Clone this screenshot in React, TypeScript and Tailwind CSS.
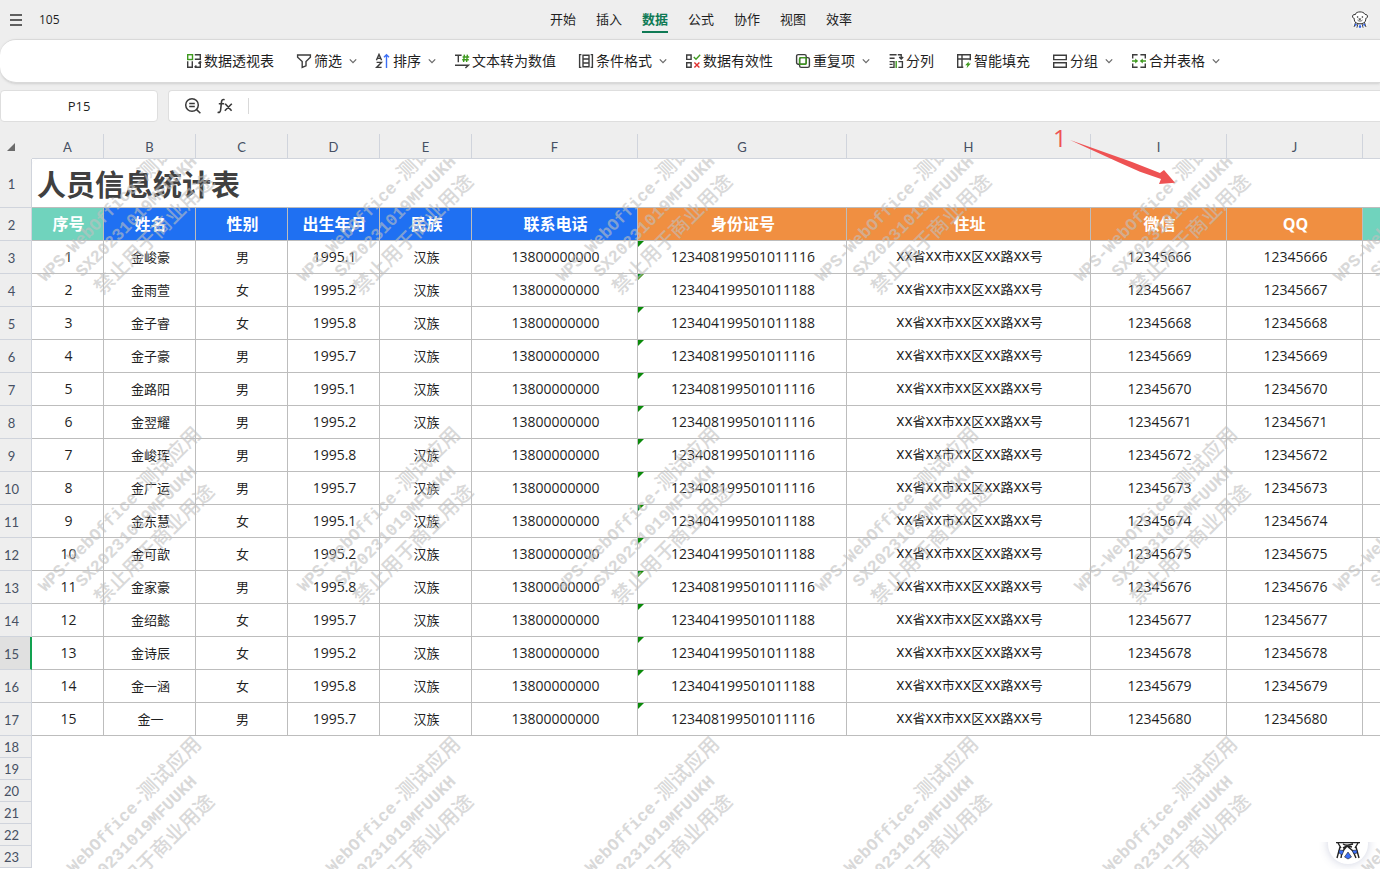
import { useState } from 'react';
import type { ReactNode } from 'react';

const tabs = ['开始', '插入', '数据', '公式', '协作', '视图', '效率'];

const DARK = '#3d3d3d';
const GREEN = '#3f9a1f';

const icons: Record<string, ReactNode> = {
  pivot: (
    <>
      <rect x="1.7" y="1.7" width="4.8" height="4.8" stroke={GREEN} />
      <path d="M8.8 1.7h5.5v4.6H8.8M1.7 8.3v6h4.6v-6M8.6 14.3h5.7V8.8M12.4 10.6l1.9-2 .9 1M10.4 12.6l-1.8 1.7" stroke={DARK} />
    </>
  ),
  filter: <path d="M1.6 2h12.8v2.2L10 8.6v4.2l-3.8 1.7V8.6L1.6 4.2z" stroke={DARK} />,
  sort: (
    <>
      <path d="M1.4 7.2 4 1.4l2.6 5.8M2.3 5.4h3.4M1.6 9.4h4.8l-4.8 5h5" stroke={DARK} />
      <path d="M11.5 15V1.8M9 4.2l2.5-2.5L14 4.2" stroke="#3b6ef5" />
    </>
  ),
  toNumber: (
    <>
      <path d="M1 2.2h6.6M4.3 2.2v7M1 12.2h13.4l-3 2.8" stroke={DARK} />
      <path d="M10.4 1.6 9.6 9M13.4 1.6 12.6 9M8.6 4h6.6M8.2 6.8h6.6" stroke={GREEN} />
    </>
  ),
  condition: (
    <path d="M3.4 1.6H1.6v12.8h1.8M12.6 1.6h1.8v12.8h-1.8M5 2.2h6v11.6H5zM5 6h6M5 10h6" stroke={DARK} />
  ),
  validity: (
    <>
      <path d="M1.7 2h4.4v4.4H1.7zM1.7 9.8h4.4v4.4H1.7z" stroke={DARK} />
      <path d="m8.8 4 2.2 2.2 4.2-4.4" stroke={GREEN} />
      <path d="m9.4 9.6 5 5M14.4 9.6l-5 5" stroke="#e0312f" />
    </>
  ),
  duplicate: (
    <>
      <rect x="1.6" y="1.6" width="9.6" height="9.6" rx="1.6" stroke={DARK} />
      <rect x="4.6" y="4.6" width="9.8" height="9.8" rx="1.6" stroke={DARK} />
      <rect x="4.6" y="4.6" width="6.6" height="6.6" rx="1" stroke={GREEN} />
    </>
  ),
  split: (
    <>
      <path d="M1.6 1.8h7M1.6 5.2h5M9.800 1.800h3.400v4M11.2 4l2 2 2-2M6 8.6H1.6M6 14.4H1.6M6 7.900v7.200M1.6 11.4h3M10.400 8.600h4v5.800h-4" stroke={DARK} />
      <path d="M8.2 8v7" stroke={GREEN} />
    </>
  ),
  fill: (
    <>
      <path d="M14.3 7.2V1.8H1.7v12.500h5.600M1.700 6h12.600M6 1.800v12.500" stroke={DARK} />
      <path d="M12.8 8.4 9.2 12.200h2.200l-.8 3 4.2-4.600h-2.200z" fill={GREEN} stroke="none" />
    </>
  ),
  group: <path d="M1.7 2.2h12.6v4.4H1.7zM1.7 9.8h12.6v4.4H1.7z" stroke={DARK} />,
  merge: (
    <>
      <path d="M6.6 1.8H1.7v3.600M9.4 1.8h4.9v3.600M6.6 14.2H1.7v-3.600M9.4 14.2h4.9v-3.600" stroke={DARK} />
      <path d="M1 8h4.4M15 8h-4.4" stroke={GREEN} />
      <path d="M4.2 5.6 7.2 8l-3 2.4zM11.8 5.6 8.8 8l3 2.4z" fill={GREEN} stroke="none" />
    </>
  ),
};

const tools = [
  { icon: 'pivot', label: '数据透视表', menu: false },
  { icon: 'filter', label: '筛选', menu: true },
  { icon: 'sort', label: '排序', menu: true },
  { icon: 'toNumber', label: '文本转为数值', menu: false },
  { icon: 'condition', label: '条件格式', menu: true },
  { icon: 'validity', label: '数据有效性', menu: false },
  { icon: 'duplicate', label: '重复项', menu: true },
  { icon: 'split', label: '分列', menu: false },
  { icon: 'fill', label: '智能填充', menu: false },
  { icon: 'group', label: '分组', menu: true },
  { icon: 'merge', label: '合并表格', menu: true },
];

const columns = [
  { letter: 'A', title: '序号', width: 'w-[72px]', bg: 'bg-[#70d3bd]' },
  { letter: 'B', title: '姓名', width: 'w-[92px]', bg: 'bg-[#1f70f2]' },
  { letter: 'C', title: '性别', width: 'w-[92px]', bg: 'bg-[#1f70f2]' },
  { letter: 'D', title: '出生年月', width: 'w-[92px]', bg: 'bg-[#1f70f2]' },
  { letter: 'E', title: '民族', width: 'w-[92px]', bg: 'bg-[#1f70f2]' },
  { letter: 'F', title: '联系电话', width: 'w-[166px]', bg: 'bg-[#1f70f2]' },
  { letter: 'G', title: '身份证号', width: 'w-[209px]', bg: 'bg-[#f08f41]' },
  { letter: 'H', title: '住址', width: 'w-[244px]', bg: 'bg-[#f08f41]' },
  { letter: 'I', title: '微信', width: 'w-[136px]', bg: 'bg-[#f08f41]' },
  { letter: 'J', title: 'QQ', width: 'w-[136px]', bg: 'bg-[#f08f41]' },
];

const people = [
  { name: '金峻豪', sex: '男', birth: '1995.1', id: '123408199501011116' },
  { name: '金雨萱', sex: '女', birth: '1995.2', id: '123404199501011188' },
  { name: '金子睿', sex: '女', birth: '1995.8', id: '123404199501011188' },
  { name: '金子豪', sex: '男', birth: '1995.7', id: '123408199501011116' },
  { name: '金路阳', sex: '男', birth: '1995.1', id: '123408199501011116' },
  { name: '金翌耀', sex: '男', birth: '1995.2', id: '123408199501011116' },
  { name: '金峻珲', sex: '男', birth: '1995.8', id: '123408199501011116' },
  { name: '金广运', sex: '男', birth: '1995.7', id: '123408199501011116' },
  { name: '金东慧', sex: '女', birth: '1995.1', id: '123404199501011188' },
  { name: '金可歆', sex: '女', birth: '1995.2', id: '123404199501011188' },
  { name: '金家豪', sex: '男', birth: '1995.8', id: '123408199501011116' },
  { name: '金绍懿', sex: '女', birth: '1995.7', id: '123404199501011188' },
  { name: '金诗辰', sex: '女', birth: '1995.2', id: '123404199501011188' },
  { name: '金一涵', sex: '女', birth: '1995.8', id: '123404199501011188' },
  { name: '金一', sex: '男', birth: '1995.7', id: '123408199501011116' },
];

const emptyRows = [18, 19, 20, 21, 22, 23];
const SELECTED_ROW = 15;

const cell = 'border-r border-b border-[#bdbdbd] p-0 pl-0.5 text-center';
const cjk = "font-['Noto_Sans_CJK_SC',sans-serif] text-[13px]";
const num = "font-['Open_Sans','Noto_Sans_CJK_SC',sans-serif] text-sm";

function ToolIcon({ name }: { name: string }) {
  return (
    <svg viewBox="0 0 16 16" className="h-4 w-4 shrink-0" fill="none" strokeWidth="1.4" aria-hidden="true">
      {icons[name]}
    </svg>
  );
}

function RowHead({ n }: { n: number }) {
  const selected = n === SELECTED_ROW;
  return (
    <th
      scope="row"
      className={`border-b border-b-[#d0d4dc] p-0 text-center font-['Lato',sans-serif] text-[13px] leading-4 font-normal text-[#465063] ${
        n < 18 ? 'pt-0.5' : ''
      } ${selected ? 'border-r-2 border-r-[#12a150] bg-[#e0e0e0] pr-[7px]' : 'border-r border-r-[#d0d4dc] bg-[#eeeeee] pr-2'}`}
    >
      {n}
    </th>
  );
}

function Watermarks() {
  return (
    <div className="pointer-events-none absolute inset-x-0 top-[25px] bottom-0 ml-8 overflow-hidden" aria-hidden="true">
      <div className="-mt-[99px] -ml-[26px]">
        {[0, 1, 2].map((r) => (
          <div key={r} className="flex">
            {[0, 1, 2, 3, 4, 5].map((c) => (
              <div key={c} className="flex h-[310px] w-[259px] shrink-0 items-center justify-center">
                <div className="-rotate-45 text-center font-['Noto_Sans_CJK_SC',sans-serif] text-xl leading-[23px] font-medium whitespace-nowrap text-[#c0c0c0] opacity-60">
                  <p>
                    <span className="font-['Liberation_Mono',monospace] text-[17px] font-bold">WPS-WebOffice-</span>测试应用
                  </p>
                  <p className="font-['Liberation_Mono',monospace] text-[17px] leading-[23px] font-bold">SX20231019MFUUKH</p>
                  <p>禁止用于商业用途</p>
                </div>
              </div>
            ))}
          </div>
        ))}
      </div>
    </div>
  );
}

function Avatar() {
  return (
    <svg viewBox="0 0 18 18" className="h-[18px] w-[18px]" fill="none" strokeLinecap="round" aria-hidden="true">
      <circle cx="9" cy="9" r="8.8" fill="#fafafa" />
      <path
        d="M4 3.4C5 1.4 7 .9 9 .9s4 .5 5 2.5c1.6-.3 2.8 1 2.4 2.6-.3 1-1 1.4-1.6 1.3.2 2.4-.8 4.1-2.6 4.9-2 .8-4.4.8-6.4 0C4 11.4 3 9.7 3.2 7.3c-.6.1-1.3-.3-1.6-1.3C1.2 4.4 2.4 3.1 4 3.4z"
        fill="#fff"
        stroke="#333"
        strokeWidth="1"
      />
      <circle cx="6.6" cy="6" r=".8" fill="#222" />
      <circle cx="11.4" cy="6" r=".8" fill="#222" />
      <path d="M8.2 7.8h1.6L9 8.7zM6.8 9.4c.8 1 3.6 1 4.4 0" stroke="#333" strokeWidth=".8" />
      <path d="M4.6 11.4 3.2 15.6M13.4 11.4l1.4 4.2M7 12.6l-1 3.8M11 12.6l1 3.8" stroke="#333" strokeWidth=".9" />
      <path d="m3.6 12.6 2.6.8-1.6 2zM14.4 12.6l-2.6.8 1.6 2zM9 13l-1.4 3L9 17.2l1.4-1.2z" fill="#2f62e8" />
    </svg>
  );
}

export default function App() {
  const [tab, setTab] = useState('数据');
  const [formula, setFormula] = useState('');
  const [cellRef, setCellRef] = useState('P15');

  return (
    <div className="flex h-screen flex-col overflow-hidden bg-[#eeeeee] font-['Open_Sans','Noto_Sans_CJK_SC',sans-serif] text-[#1f1f1f]">
      <header className="grid h-[39px] shrink-0 grid-cols-[1fr_auto_1fr] items-center">
        <div className="flex items-center gap-4 pl-[9px]">
          <button aria-label="菜单">
            <svg viewBox="0 0 14 14" className="h-3.5 w-3.5" stroke="#5f5f5f" strokeWidth="2" aria-hidden="true">
              <path d="M1 2h12M1 7h12M1 12h12" />
            </svg>
          </button>
          <span className="text-xs">105</span>
        </div>
        <nav className="-mt-px flex gap-5 pl-[22px]">
          {tabs.map((t) => (
            <button
              key={t}
              onClick={() => setTab(t)}
              className={`border-y-2 border-t-transparent py-0.5 text-[13px] leading-5 ${
                tab === t ? 'border-b-[#0f7a55] font-bold text-[#0f7a55]' : 'border-b-transparent'
              }`}
            >
              {t}
            </button>
          ))}
        </nav>
        <button className="mr-[11px] justify-self-end" aria-label="用户">
          <Avatar />
        </button>
      </header>

      {/* Ribbon */}
      <div className="flex h-11 shrink-0 items-center justify-center gap-[22px] rounded-l-2xl border-y border-[#d9d9d9] bg-white pl-[22px] shadow-sm">
        {tools.map((t) => (
          <button key={t.label} className="flex shrink-0 items-center text-sm whitespace-nowrap">
            <ToolIcon name={t.icon} />
            <span className="ml-0.5">{t.label}</span>
            {t.menu && (
              <svg viewBox="0 0 8 8" className="-mr-1 ml-[7px] h-2 w-2" fill="none" stroke="#6b6b6b" strokeWidth="1.3" aria-hidden="true">
                <path d="m.8 2.4 3.2 3.2 3.2-3.2" />
              </svg>
            )}
          </button>
        ))}
      </div>

      {/* Name box and formula bar */}
      <div className="mt-[7px] flex h-8 shrink-0 gap-2.5">
        <input
          aria-label="名称框"
          value={cellRef}
          onChange={(e) => setCellRef(e.target.value)}
          className="w-[158px] rounded border border-[#dedede] bg-white pt-0.5 text-center text-[13px]"
        />
        <div className="flex flex-1 items-center rounded-l border border-r-0 border-[#dedede] bg-white pl-[15px]">
          <button aria-label="查找">
            <svg viewBox="0 0 18 18" className="h-[18px] w-[18px]" fill="none" stroke="#3a3a3a" strokeWidth="1.5" aria-hidden="true">
              <circle cx="8" cy="8" r="6.3" />
              <path d="m12.6 12.6 3.8 3.6M5.2 6.6h5.6M5.2 9.4h5.6" />
            </svg>
          </button>
          <button className="ml-[15px]" aria-label="插入函数">
            <svg viewBox="0 0 16 16" className="h-4 w-4" fill="none" stroke="#3a3a3a" strokeWidth="1.6" aria-hidden="true">
              <path d="M7.6 1.8C5.6 1 4.7 2 4.5 3.8L3.6 12c-.2 1.9-1.2 2.8-3 2.2M1.8 5.8h5.4M8.2 5.8l6.4 7M14.8 5.8l-7 7" />
            </svg>
          </button>
          <label className="ml-[15px] flex h-4 flex-1 items-center border-l border-[#d9d9d9] pl-2">
            <input aria-label="编辑栏" value={formula} onChange={(e) => setFormula(e.target.value)} className="w-full text-[13px] outline-none" />
          </label>
        </div>
      </div>

      {/* Sheet */}
      <main className="relative mt-3 flex-1 bg-white">
        <table className="w-full min-w-[1380px] table-fixed border-separate border-spacing-0">
          <colgroup>
            <col className="w-8" />
            {columns.map((c) => (
              <col key={c.letter} className={c.width} />
            ))}
            <col />
          </colgroup>
          <thead>
            <tr className="h-[25px] bg-[#eeeeee]">
              <th className="p-0" aria-label="全选">
                <svg viewBox="0 0 8 8" className="ml-[7px] h-2 w-2" fill="#6b6b6b" aria-hidden="true">
                  <path d="M8 0v8H0z" />
                </svg>
              </th>
              {columns.map((c) => (
                <th
                  key={c.letter}
                  scope="col"
                  className="border-r border-b border-[#d0d4dc] p-0 pt-0.5 font-['Lato',sans-serif] text-[13px] leading-4 font-normal text-[#465063]"
                >
                  {c.letter}
                </th>
              ))}
              <th className="border-b border-[#d0d4dc] p-0" />
            </tr>
          </thead>
          <tbody>
            <tr className="h-[49px] bg-[#eeeeee]">
              <RowHead n={1} />
              <td
                colSpan={11}
                className="rounded-tl-md border-b border-[#bdbdbd] bg-white p-0 pl-[5px] font-['Noto_Sans_CJK_SC',sans-serif] text-[29px] leading-10 font-bold text-[#404040]"
              >
                人员信息统计表
              </td>
            </tr>
            <tr className="h-[33px]">
              <RowHead n={2} />
              {columns.map((c) => (
                <td key={c.letter} className={`${cell} ${c.bg} text-base font-bold text-white`}>
                  {c.title}
                </td>
              ))}
              <td className="border-b border-[#bdbdbd] bg-[#70d3bd] p-0" />
            </tr>
            {people.map((p, i) => (
              <tr key={p.name} className="h-[33px]">
                <RowHead n={i + 3} />
                <td className={`${cell} ${num}`}>{i + 1}</td>
                <td className={`${cell} ${cjk}`}>{p.name}</td>
                <td className={`${cell} ${cjk}`}>{p.sex}</td>
                <td className={`${cell} ${num}`}>{p.birth}</td>
                <td className={`${cell} ${cjk}`}>汉族</td>
                <td className={`${cell} ${num}`}>13800000000</td>
                <td className={`${cell} ${num} relative`}>
                  <span className="absolute top-0 left-0 border-t-[6px] border-r-[6px] border-t-[#0a8a0a] border-r-transparent" />
                  {p.id}
                </td>
                <td className={`${cell} font-['Roboto','Noto_Sans_CJK_SC',sans-serif] text-[13px]`}>XX省XX市XX区XX路XX号</td>
                <td className={`${cell} ${num}`}>{12345666 + i}</td>
                <td className={`${cell} ${num}`}>{12345666 + i}</td>
                <td className="border-b border-[#bdbdbd] p-0" />
              </tr>
            ))}
            {emptyRows.map((n) => (
              <tr key={n} className="h-[22px]">
                <RowHead n={n} />
                <td colSpan={11} className="p-0" />
              </tr>
            ))}
          </tbody>
        </table>

        <Watermarks />

        {/* Step marker pointing at the sheet */}
        <div className="pointer-events-none absolute -top-3 left-[1053px] flex items-start text-[#ee5253]">
          <span className="text-2xl">1</span>
          <svg viewBox="0 0 110 50" className="mt-4 h-[50px] w-[110px]" fill="currentColor" aria-hidden="true">
            <path d="M3 2 65 24l28 11 4-3 11 12.7L92 46l2-5-21-7.3L51 24z" />
          </svg>
        </div>

        {/* Assistant bubble, its upper half stays tucked away */}
        <div className="absolute right-0 bottom-0 h-[27px] w-20 overflow-hidden">
          <button
            className="absolute right-3 bottom-[5px] flex h-10 w-10 items-center justify-center rounded-full bg-white shadow-[0_0_10px_rgba(60,70,130,0.25)]"
            aria-label="助手"
          >
            <svg viewBox="0 0 40 40" className="h-10 w-10" fill="none" stroke="#222" strokeWidth="1.4" aria-hidden="true">
              <path d="M8 18.5h24M15 20c3 2 7 1 10 0M10 19l3 5M30 19l-3 5M12 23l-3 11M28 23l3 11M19 22l-5 6-1 6M19 22l6 5 3 7M19 22l-4 2M20 22l4 1" />
              <path d="m11 26 5 .5-2 4.500-3-2zM29 26l-5 .5 2 3.500 3-1zM20 28l-3.500 5 3.500 2 3.500-2z" fill="#3b6ef5" strokeWidth=".6" />
            </svg>
          </button>
        </div>
      </main>
    </div>
  );
}
